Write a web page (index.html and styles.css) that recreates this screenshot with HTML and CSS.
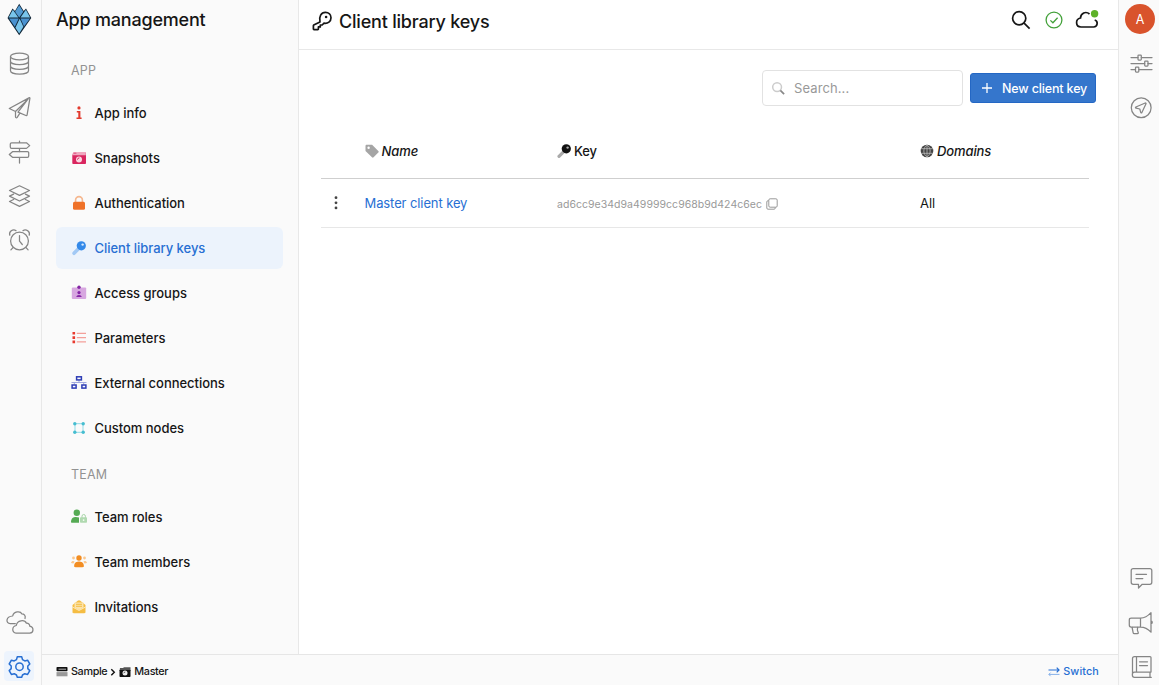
FILE: index.html
```html
<!DOCTYPE html>
<html lang="en">
<head>
<meta charset="utf-8">
<title>App management</title>
<link rel="stylesheet" href="styles.css">
</head>
<body>
<div class="app">
  <nav class="rail rail-left">
    <a class="rail-item"><svg viewBox="0 0 30 30"><path fill="#102536" d="M15.2-.2 19.7 7 22 4.400 27.300 14 15.200 31.200 3.500 14 8.500 4.400 11 7Z"/><path fill="#539bd3" d="m15.200 1.300 4.100 6.500-4.100 5.700-4.100-5.700Z"/><path fill="#79c5ec" d="m8.900 5.800 5.400 7.700H4.600Z"/><path fill="#79c5ec" d="m21.900 5.800 4.200 7.700h-9.600Z"/><path fill="#4a92d0" d="M5.100 14.400h9.700l-4 8.300Z"/><path fill="#79c5ec" d="m15.700 14.800 3.700 7.900-4.200 6.700-3.800-5.700Z"/><path fill="#4a92d0" d="M16.500 14.400H26l-6 8Z"/></svg></a>
    <a class="rail-item"><svg class="line" viewBox="0 0 30 30"><ellipse cx="15.500" cy="8.500" rx="9" ry="3.300"/><path d="M6.500 8.500v14.200c0 1.900 4 3.300 9 3.300s9-1.400 9-3.300V8.500M6.500 13.300c0 1.900 4 3.300 9 3.300s9-1.400 9-3.300M6.500 18c0 1.900 4 3.300 9 3.300s9-1.400 9-3.300"/></svg></a>
    <a class="rail-item"><svg class="line" viewBox="0 0 30 30"><path d="M25.400 5.600 5.300 16.500l6.200 3 12.500-12.300-10 13 7.900 3.300c.6.200 1.100-.1 1.200-.7l2.800-16.400c.1-.6-.1-.9-.5-.8ZM11.500 19.500v5.200c0 1.100 1.100 1.400 1.700.6l2.700-4.200"/></svg></a>
    <a class="rail-item"><svg class="line" viewBox="0 0 30 30"><path d="M15.500 5v1.800m0 5.700v3.300m0 5.500V27M7.600 6.800h14.900l3.200 2.800-3.200 2.800H7.600c-.8 0-1.300-.5-1.300-1.300V8.100c0-.8.500-1.300 1.300-1.300ZM23.400 15.700H8.500l-3.200 2.800 3.200 2.800h14.900c.8 0 1.300-.5 1.300-1.300v-3c0-.8-.5-1.300-1.300-1.300Z"/></svg></a>
    <a class="rail-item"><svg class="line" viewBox="0 0 30 30"><path d="m15.500 5.800 10 4.700-10 4.900-10-4.900ZM9.600 14.100l-4.100 2 10 4.900 10-4.900-4.100-2M9.600 19.500l-4.100 2 10 4.900 10-4.900-4.100-2"/></svg></a>
    <a class="rail-item"><svg class="line" viewBox="0 0 30 30"><circle cx="15.500" cy="17" r="8.900"/><path d="M15.500 11.500v5.700l2.800 3.300M9.200 23.400l-2.300 2.500M21.800 23.400l2.300 2.500M5.800 11.200c-1.200-3.400 3-6.800 6.300-4.500M25.200 11.200c1.200-3.400-3-6.800-6.300-4.500"/></svg></a>
    <span class="spacer"></span>
    <a class="rail-item"><svg class="line" viewBox="0 0 30 30"><path d="M21 11.500c1-3.100-1-4.600-3.100-4.600C16.500 3.800 9.600 4.200 8.700 9 1.700 9.400 1.400 16.400 6.200 16.700h5.100"/><path d="M12.300 18.500c.8-5.500 8.300-6.100 10.100-2.300 2-.2 3.500 1.200 3.300 2.900 4.500 1 4.200 6.900 0 6.900H12c-4.400 0-4.300-6.800.3-7.500Z"/></svg></a>
    <a class="rail-item selected"><svg class="line thick" viewBox="0 0 30 30"><circle cx="15.500" cy="15.700" r="3.700"/><path d="M13.300 5.800h4.400l.8 2.800 2.300 1.300 2.800-.7 2.200 3.800-2 2v2.600l2 2-2.200 3.800-2.800-.7-2.300 1.300-.8 2.300h-4.400l-.8-2.300-2.300-1.300-2.800.7-2.200-3.800 2-2V15l-2-2 2.200-3.800 2.800.7 2.300-1.300Z"/></svg></a>
  </nav>

  <div class="center">
    <div class="workspace">
      <aside class="sidebar">
        <h1 class="sidebar-title">App management</h1>
        <h2 class="section-label">APP</h2>
        <ul class="menu">
          <li class="menu-item"><svg viewBox="0 0 16 16" fill="#e23a2e"><circle cx="8" cy="2.900" r="1.600"/><path d="M5.800 6h3.600v6.400h1.200V14H5.500v-1.600h1.800V7.600H5.800Z"/></svg><span>App info</span></li>
          <li class="menu-item"><svg viewBox="0 0 16 16"><path fill="#d9265f" d="M2.300 2.500h3.500v1h8v-1.100c.7 0 1.200.4 1.200 1v9.500c0 .7-.5 1.200-1.200 1.200H2.500c-.7 0-1.200-.5-1.200-1.200V4.500h1Z"/><path fill="#f0a7bf" d="M1.300 3.500h4l1-1.400h8.500v3.200H1.300Z"/><circle cx="8" cy="9.500" r="3" fill="#fbd7e2"/><path d="M6.400 9.700a2 2 0 0 1 2-1.800" fill="none" stroke="#d9265f"/></svg><span>Snapshots</span></li>
          <li class="menu-item"><svg viewBox="0 0 16 16"><path d="M4.600 7V5a3.400 3.400 0 0 1 6.800 0v2" fill="none" stroke="#f5b78f" stroke-width="1.600"/><rect x="2" y="6.700" width="12" height="8" rx="1.500" fill="#ef7128"/></svg><span>Authentication</span></li>
          <li class="menu-item active"><svg viewBox="0 0 16 16"><path d="M7.500 8.800 3 13.300" stroke="#a2c9f5" stroke-width="3.600" stroke-linecap="round"/><circle cx="10.300" cy="5.800" r="4.600" fill="#3389e9"/><circle cx="11.600" cy="4.600" r="1.200" fill="#d5e9ff"/></svg><span>Client library keys</span></li>
          <li class="menu-item"><svg viewBox="0 0 16 16"><rect x=".8" y="2.600" width="14.400" height="11.400" rx="1" fill="#d7a7e0"/><g fill="#8424a5"><circle cx="8" cy="2.200" r="1.700"/><circle cx="8" cy="7.600" r="1.600"/><path d="M5.300 12c0-2.800 5.400-2.800 5.400 0Z"/></g></svg><span>Access groups</span></li>
          <li class="menu-item"><svg viewBox="0 0 16 16"><path fill="#e83a2f" d="M1.500 2h2.600v2.600H1.500Zm0 4.300h2.600v2.600H1.500Zm0 4.300h2.600v2.600H1.500Z"/><path stroke="#f3a09a" stroke-width="1.300" d="M5.800 3.300H15M5.800 7.600H15M5.800 11.900H15"/></svg><span>Parameters</span></li>
          <li class="menu-item"><svg viewBox="0 0 16 16"><path d="M.5 7.500h15M8 5v2.500M3.300 7.500v2m9.400-2v2" fill="none" stroke="#a0a9df"/><g fill="none" stroke="#2d3cb5" stroke-width="1.500"><rect x="5.600" y="1.800" width="4.800" height="3.100"/><rect x="1.100" y="10" width="4" height="3.100"/><rect x="10.900" y="10" width="4" height="3.100"/></g></svg><span>External connections</span></li>
          <li class="menu-item"><svg viewBox="0 0 16 16"><path d="M4 3.700h8v8.600H4Z" fill="none" stroke="#93dbe6"/><g fill="#45bdd0"><circle cx="3.800" cy="3.800" r="1.700"/><circle cx="12.200" cy="3.800" r="1.700"/><circle cx="3.800" cy="12.200" r="1.700"/><circle cx="12.200" cy="12.200" r="1.700"/></g></svg><span>Custom nodes</span></li>
        </ul>
        <h2 class="section-label team">TEAM</h2>
        <ul class="menu">
          <li class="menu-item"><svg viewBox="0 0 16 16"><g fill="#55aa54"><circle cx="5.800" cy="3.700" r="3.200"/><path d="M0 13.200c0-6 5-5.600 8-4.800v5.300H.6Z"/></g><path d="M11 9V7.200a1.700 1.700 0 0 1 3.400 0V9" fill="none" stroke="#a7d5a7"/><rect x="9" y="8.300" width="7" height="5.400" rx=".8" fill="#b0d9b0"/><circle cx="12.600" cy="11.100" r=".9" fill="#f3fff3"/></svg><span>Team roles</span></li>
          <li class="menu-item"><svg viewBox="0 0 16 16"><g fill="#fac78e"><circle cx="2.500" cy="4" r="1.400"/><circle cx="13.500" cy="4" r="1.400"/><path d="M0 9c.3-2.500 3-2.500 3.600-1.300L2.400 9.600Zm16 0c-.3-2.500-3-2.500-3.600-1.300l1.200 1.900Z"/></g><g fill="#f28d22"><circle cx="8" cy="4" r="2.700"/><path d="M3.200 12.700V11C3.600 6.400 12.400 6.400 12.800 11v1.700c0 .7-9.600.7-9.600 0Z"/></g></svg><span>Team members</span></li>
          <li class="menu-item"><svg viewBox="0 0 16 16"><path fill="#f5bd43" d="m1.500 6 5.200-4.200c.8-.7 1.800-.7 2.600 0L14.500 6v7c0 .8-.5 1.200-1.200 1.200H2.700c-.7 0-1.200-.4-1.200-1.200Z"/><path fill="#fbe3ac" d="M3.500 3.500h9v5L8 11 3.500 8.500Z"/><path d="M5 5.300h6M5 7.300h6" stroke="#f5bd43"/><path d="M1.500 8 8 11.500 14.500 8" fill="none" stroke="#fff2d4" stroke-width=".8"/></svg><span>Invitations</span></li>
        </ul>
      </aside>

      <main class="main">
        <header class="topbar">
          <svg class="title-key" viewBox="0 0 20 20"><path d="M8 10.900C6.700 5.600 9.200 1.300 13.400 1.300c3.300 0 5.600 2.500 5.600 5.500 0 3.600-3.100 6-7 5.400L10.200 14H8.300v1.900H6.400v2.200c0 .4-.2.600-.6.600H2c-.4 0-.6-.2-.6-.6v-3.300c0-.3.100-.5.300-.7Z"/><circle cx="14.100" cy="6" r="1.300" class="dot"/></svg>
          <h2 class="topbar-title">Client library keys</h2>
          <div class="topbar-actions">
            <svg viewBox="0 0 24 24"><circle cx="10.200" cy="10.200" r="6.600"/><path d="m15.100 15.100 5.500 5.500"/></svg>
            <svg class="ok" viewBox="0 0 24 24"><circle cx="12" cy="12" r="7.900"/><path d="m8.400 12.400 2.500 2.400 4.700-5"/></svg>
            <svg viewBox="0 0 24 24"><path d="M14.500 6C10.800 2.800 5.700 5.200 5.500 10 0 11 .4 19 6 19h12.600c4 0 5-5.800 1.100-7"/><circle class="online" cx="19.600" cy="5.800" r="3.700"/></svg>
          </div>
        </header>
        <section class="content">
          <div class="toolbar">
            <label class="search"><svg viewBox="0 0 16 16"><circle cx="6.500" cy="6.500" r="4.700" fill="none" stroke="#ccc" stroke-width="1.600"/><path d="m10 10 4 4" stroke="#888" stroke-width="1.800"/></svg><span>Search...</span></label>
            <button class="new-key"><svg viewBox="0 0 12 12"><path d="M6 1v10M1 6h10" stroke="#fff" stroke-width="1.300"/></svg><span>New client key</span></button>
          </div>
          <div class="table">
            <div class="row head">
              <span></span>
              <span class="cell italic"><svg viewBox="1 1 14 14"><path fill="#a5a5a5" d="M1.500 3c0-.8.500-1.300 1.300-1.300h5.300l6.200 6.200c.6.600.6 1 0 1.600l-4.700 4.700c-.6.600-1 .6-1.600 0L1.500 8Z"/><circle cx="4.600" cy="4.800" r="1.200" fill="#fff"/></svg>Name</span>
              <span class="cell"><svg viewBox="1 1 14 14"><path d="M7.500 8.800 3 13.300" stroke="#aaa" stroke-width="3.200" stroke-linecap="round"/><circle cx="10.300" cy="5.800" r="4.600" fill="#111"/><circle cx="11.600" cy="4.600" r="1.200" fill="#aaa"/></svg>Key</span>
              <span class="cell italic"><svg viewBox="1 1 14 14"><circle cx="8" cy="8" r="6.300" fill="#444"/><path d="M2 5.700h12M2 10.300h12M8 2v12M8 1.800C3.800 5 3.800 11 8 14.200 12.200 11 12.200 5 8 1.800" fill="none" stroke="#bbb" stroke-width=".8"/></svg>Domains</span>
            </div>
            <div class="row">
              <span class="dots"><svg viewBox="0 0 4 16"><circle cx="2" cy="2.700" r="1.400"/><circle cx="2" cy="7.800" r="1.400"/><circle cx="2" cy="12.900" r="1.400"/></svg></span>
              <a class="key-name">Master client key</a>
              <span class="key-value"><span>ad6cc9e34d9a49999cc968b9d424c6ec</span><svg viewBox="0 0 12 12"><rect x="2.800" y=".8" width="8.400" height="8.400" rx="1.300"/><path d="M2.700 2.700H2C1.200 2.700.8 3.200.8 4v6c0 .8.400 1.200 1.200 1.200h6c.8 0 1.300-.4 1.300-1.200v-.7"/></svg></span>
              <span class="domain">All</span>
            </div>
          </div>
        </section>
      </main>
    </div>
    <footer class="footer">
      <div class="crumbs">
        <svg viewBox="0 0 12 12"><rect x=".5" y="1" width="11" height="4.300" rx=".8" fill="#111"/><path d="M2.500 3.200H10" stroke="#ddd" stroke-width=".8"/><path fill="#999" d="M.5 6.100h11v4.200H.5Z"/></svg>
        <span>Sample</span>
        <svg class="chevron" viewBox="0 0 6 12"><path d="m1.300 3.200 3 3-3 3" fill="none" stroke="#111" stroke-width="1.400"/></svg>
        <svg viewBox="0 0 12 12"><path fill="#555" d="M1 2h3l1-.8h6.500V5H.5Z"/><path fill="#111" d="M.5 4h11v6c0 .6-.4 1-1 1h-9c-.6 0-1-.4-1-1Z"/><circle cx="6" cy="7" r="2.500" fill="#eee"/><path d="M4.800 7.200A1.500 1.500 0 0 1 6.300 6" fill="none" stroke="#333" stroke-width=".8"/></svg>
        <span>Master</span>
      </div>
      <a class="switch"><svg viewBox="0 0 12 12"><path d="M.5 4H11M8.700 1.700 11 4 8.700 6.300" fill="none" stroke="#276fd3" stroke-width="1.200"/><path d="M11.500 8.400H1m1.600-1.800L.8 8.400l1.800 1.800" fill="none" stroke="#86b0e9"/></svg><span>Switch</span></a>
    </footer>
  </div>

  <nav class="rail rail-right">
    <a class="avatar">A</a>
    <a class="rail-item"><svg class="line" viewBox="0 0 30 30"><path d="M5 9.500h7m3.300 0H26M5 15.500h13.700m3.200 0H26M5 21.500h4.500m3.300 0H26"/><rect x="12" y="7" width="3.300" height="5" rx=".7"/><rect x="18.700" y="13" width="3.300" height="5" rx=".7"/><rect x="9.500" y="19" width="3.300" height="5" rx=".7"/></svg></a>
    <a class="rail-item"><svg class="line" viewBox="0 0 30 30"><circle cx="15.200" cy="15.700" r="9.900"/><path d="m19.200 11-9.300 4c-.7.300-.5 1.100.2 1.200l3.700.8.900 3.400c.2.700.9.800 1.200.1l4.100-8.700c.2-.5-.2-1-.8-.8Z"/></svg></a>
    <span class="spacer"></span>
    <a class="rail-item"><svg class="line" viewBox="0 0 30 30"><path d="M7.200 5.500h16.600c1.300 0 2 .7 2 2v11.800c0 1.300-.7 2-2 2h-7.600L12.500 25v-3.700H7.200c-1.300 0-2-.7-2-2V7.500c0-1.300.7-2 2-2ZM10 11.300h10.500M10 15.500h6.800"/></svg></a>
    <a class="rail-item"><svg class="line" viewBox="0 0 30 30"><path d="M5.200 11.200h9.300c4 0 7.800-2.500 10.500-5.500v19.500c-2.700-3-6.500-5.200-10.500-5.200H5.200c-1.200 0-1.900-.8-1.900-2v-5c0-1.100.7-1.800 1.900-1.800ZM14.500 11.200V20M6 20l1.200 5.800c.1.500.5.800 1 .8h3.300c.8 0 1-.5.700-1.200C11.500 23.800 11 22 11.700 20M25 13.800c1.700.3 1.700 2.700 0 3"/></svg></a>
    <a class="rail-item"><svg class="line" viewBox="0 0 30 30"><path d="M8.500 5.500H24c.6 0 1 .4 1 1V21H8.500c-2.900 0-2.900 5.300 0 5.300h16.800M24 21v5.300M6.500 23V7.500c0-1.300.7-2 2-2M10.500 5.500V21M13.500 10.800h8M13.500 14.500h8"/></svg></a>
  </nav>
</div>
</body>
</html>
```
FILE: styles.css
```css
* { box-sizing: border-box; }

body {
  margin: 0;
  font-family: Inter, "Liberation Sans", sans-serif;
  font-size: 13px;
  color: #161616;
  background: #fff;
}

h1, h2, ul { margin: 0; padding: 0; }
svg { display: block; flex: none; }

.app { display: flex; width: 1159px; height: 685px; overflow: hidden; }

.rail {
  display: flex;
  flex: none;
  flex-direction: column;
  gap: 14px;
  background: #fafafa;
}
.rail-left { width: 42px; padding: 4px 0 4px 4px; border-right: 1px solid #e8e8e8; }
.rail-right { width: 41px; padding: 4px 0 4px 7px; border-left: 1px solid #e8e8e8; }
.rail-item { width: 30px; height: 30px; border-radius: 4px; }
.rail-item svg { width: 30px; height: 30px; overflow: visible; }
.rail-item.selected { background: #edf4fd; }
.spacer { flex: 1; }
.line { fill: none; stroke: #858585; stroke-width: 1.25; stroke-linejoin: round; stroke-linecap: round; }
.line.thick { stroke: #276fd3; stroke-width: 1.5; }
.avatar {
  display: flex;
  align-items: center;
  justify-content: center;
  width: 30px;
  height: 30px;
  margin-left: -1px;
  border-radius: 50%;
  background: #d9532c;
  color: #fff;
  font-size: 12.5px;
}

.center { display: flex; flex: 1; flex-direction: column; min-width: 0; }
.workspace { display: flex; flex: 1; min-height: 0; }

.sidebar { width: 257px; padding: 7px 15px 0 14px; background: #fafafa; border-right: 1px solid #e8e8e8; }
.sidebar-title { height: 26px; line-height: 26px; font-size: 18px; font-weight: 500; letter-spacing: -.2px; }
.section-label {
  height: 20px;
  margin: 28px 0 11px 15px;
  line-height: 20px;
  font-size: 12.5px;
  font-weight: 400;
  letter-spacing: .2px;
  color: #929292;
}
.section-label.team { margin: 16px 0 11px 15px; }
.menu { display: flex; flex-direction: column; gap: 3px; list-style: none; }
.menu-item {
  display: flex;
  align-items: center;
  gap: 7.5px;
  height: 42px;
  padding-left: 15px;
  border-radius: 6px;
  font-weight: 500;
  letter-spacing: -.03px;
}
.menu-item svg { width: 16px; height: 16px; }
.menu-item.active { background: #ecf3fc; color: #276fd3; }

.main { display: flex; flex: 1; flex-direction: column; min-width: 0; background: #fff; }
.topbar { display: flex; align-items: center; height: 50px; padding: 0 19px 7px 13px; border-bottom: 1px solid #e8e8e8; }
.title-key { width: 20px; height: 20px; fill: none; stroke: #161616; stroke-width: 1.7; stroke-linejoin: round; }
.title-key .dot { fill: #161616; stroke: none; }
.topbar-title { margin-left: 7px; font-size: 18px; font-weight: 500; letter-spacing: -.2px; }
.topbar-actions { display: flex; gap: 9px; margin: 0 0 3px auto; }
.topbar-actions svg { width: 24px; height: 24px; fill: none; stroke: #161616; stroke-width: 1.7; }
.topbar-actions .ok { stroke: #43a13a; stroke-width: 1.3; }
.topbar-actions .online { fill: #5eb129; stroke: none; }

.content { padding: 20px 22px 0; }
.toolbar { display: flex; align-items: center; justify-content: flex-end; gap: 7px; }
.search {
  display: flex;
  align-items: center;
  gap: 8px;
  width: 201px;
  height: 36px;
  padding-left: 8px;
  border: 1px solid #e2e2e2;
  border-radius: 4px;
  color: #999;
  letter-spacing: .1px;
}
.search svg { width: 15px; height: 15px; }
.new-key {
  display: flex;
  align-items: center;
  gap: 9px;
  width: 126px;
  height: 30px;
  padding: 0 0 0 10px;
  border: 1px solid #2467c4;
  border-radius: 3px;
  background: #3576cc;
  color: #fff;
  font: 500 12.5px Inter, sans-serif;
  letter-spacing: -.15px;
  white-space: nowrap;
}
.new-key svg { width: 12px; height: 12px; }

.table { width: 768px; margin-top: 19px; }
.row { display: grid; grid-template-columns: 43.5px 192.5px 363px 1fr; align-items: center; height: 49px; border-bottom: 1px solid #e7e7e7; }
.row.head { height: 54px; padding-bottom: 1px; border-bottom-color: #cfcfcf; font-weight: 500; }
.cell { display: flex; align-items: center; gap: 3px; letter-spacing: -.1px; }
.cell svg { width: 14px; height: 14px; }
.italic { font-style: italic; }
.dots { padding-left: 13px; }
.dots svg { width: 4px; height: 16px; fill: #444; }
.key-name { color: #276fd3; letter-spacing: -.1px; }
.key-value { display: flex; align-items: center; gap: 4px; padding-top: 2px; font-size: 10.5px; letter-spacing: .04px; color: #999; }
.key-value svg { width: 12px; height: 12px; fill: none; stroke: #999; }

.footer {
  display: flex;
  align-items: center;
  justify-content: space-between;
  height: 31px;
  padding: 3px 19px 0 14px;
  border-top: 1px solid #e6e6e6;
  background: #fafafa;
  font-size: 10.8px;
  font-weight: 500;
}
.crumbs, .switch { display: flex; align-items: center; gap: 3px; }
.crumbs { letter-spacing: -.35px; }
.crumbs svg, .switch svg { width: 12px; height: 12px; }
.crumbs .chevron { width: 6px; }
.switch { color: #276fd3; letter-spacing: .15px; }
```
